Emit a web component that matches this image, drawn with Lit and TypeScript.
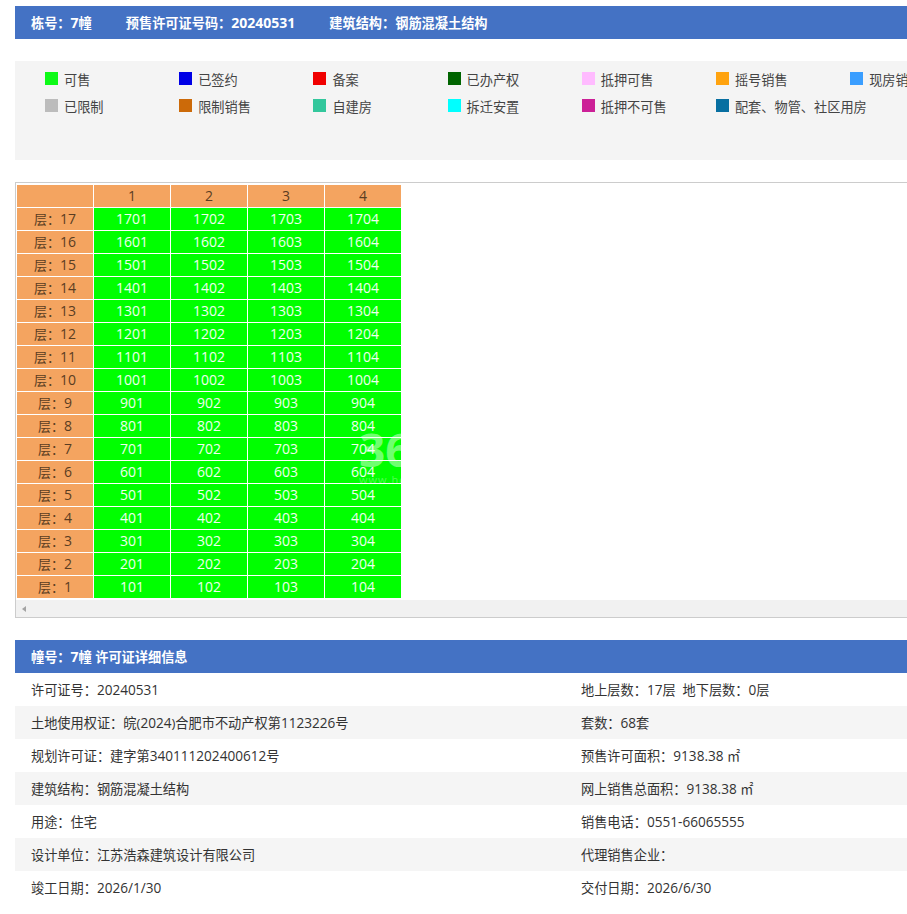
import { LitElement, html, css } from 'lit';
import { customElement } from 'lit/decorators.js';

const legend = [
  ['可售', '#0dfa17'], ['已签约', '#0000e6'], ['备案', '#f00000'], ['已办产权', '#006400'],
  ['抵押可售', '#ffbbff'], ['摇号销售', '#ffa30f'], ['现房销售', '#3a9eff'],
  ['已限制', '#bcbcbc'], ['限制销售', '#cc6a09'], ['自建房', '#33c79c'], ['拆迁安置', '#0ff'],
  ['抵押不可售', '#cc2097'], ['配套、物管、社区用房', '#086fa1'],
];

const floors = [17, 16, 15, 14, 13, 12, 11, 10, 9, 8, 7, 6, 5, 4, 3, 2, 1];

const details = [
  ['许可证号：20240531', '地上层数：17层\u00a0\u00a0地下层数：0层'],
  ['土地使用权证：皖(2024)合肥市不动产权第1123226号', '套数：68套'],
  ['规划许可证：建字第340111202400612号', '预售许可面积：9138.38 ㎡'],
  ['建筑结构：钢筋混凝土结构', '网上销售总面积：9138.38 ㎡'],
  ['用途：住宅', '销售电话：0551-66065555'],
  ['设计单位：江苏浩森建筑设计有限公司', '代理销售企业：'],
  ['竣工日期：2026/1/30', '交付日期：2026/6/30'],
];

// digits sit a little wider than the Chinese text around them
const nums = (text: string) =>
  text.split(/([0-9][0-9./-]*)/).map((part, i) => (i % 2 ? html`<span class="n">${part}</span>` : part));

@customElement('app-root')
export class AppRoot extends LitElement {
  static styles = css`
    :host {
      display: block;
      height: 914px;
      overflow: hidden;
      background: #fff;
      color: #333;
      font-family: "Open Sans", "Noto Sans CJK SC", sans-serif;
      font-size: 13.2px;
    }
    .page {
      width: 1200px;
      padding: 6px 0 0 15px;
    }
    .n {
      font-size: 13.6px;
    }
    .bar {
      display: flex;
      gap: 34px;
      height: 33px;
      align-items: center;
      padding-left: 16px;
      background: #4472c4;
      color: #fff;
      font-weight: 700;
    }
    .bar .n {
      font-size: 14px;
    }
    .legend {
      display: grid;
      grid-template-columns: repeat(7, 134.2px);
      grid-auto-rows: 27px;
      height: 99px;
      box-sizing: border-box;
      margin-top: 22px;
      padding: 5px 0 0 30px;
      background: #f4f4f4;
      color: #444;
    }
    .legend-item {
      display: flex;
      align-items: center;
      gap: 6px;
      white-space: nowrap;
    }
    .swatch {
      width: 13px;
      height: 13px;
      flex: none;
      margin-bottom: 2px;
    }
    .frame {
      position: relative;
      margin-top: 22px;
      border: 1px solid #ccc;
      padding-top: 1px;
    }
    table {
      border-collapse: separate;
      border-spacing: 1px;
      table-layout: fixed;
      font-size: 14px;
    }
    td, th {
      width: 76px;
      height: 21px;
      padding: 0 0 1px;
      text-align: center;
      font-weight: 400;
      background: #f4a460;
      color: #5a3d22;
    }
    td.unit {
      background: #0f0;
      color: #f0fff0;
    }
    .floor-label {
      font-size: 13px;
    }
    .scroll {
      display: flex;
      align-items: center;
      height: 17px;
      margin-top: 1px;
      padding-left: 6px;
      background: #f1f1f1;
    }
    .arrow {
      width: 0;
      height: 0;
      border: 3px solid transparent;
      border-left: 0;
      border-right: 4px solid #a3a3a3;
    }
    .mark {
      position: absolute;
      left: 343px;
      top: 238px;
      color: rgba(255, 255, 255, 0.45);
      pointer-events: none;
      white-space: nowrap;
    }
    .mark-num {
      font-size: 46px;
      font-weight: 700;
      line-height: 56px;
    }
    .mark-url {
      font-size: 11px;
      line-height: 12px;
      letter-spacing: 1px;
      margin-top: -3px;
      opacity: 0.7;
    }
    .info {
      margin-top: 22px;
    }
    .row {
      display: grid;
      grid-template-columns: 550px 1fr;
      height: 33px;
      align-items: center;
      padding-left: 16px;
    }
    .row:nth-child(even) {
      background: #f5f5f5;
    }
  `;

  render() {
    return html`
      <div class="page">
        <div class="bar">
          <span>栋号：${nums('7')}幢</span>
          <span>预售许可证号码：${nums('20240531')}</span>
          <span>建筑结构：钢筋混凝土结构</span>
        </div>
        <div class="legend">
          ${legend.map(([name, color]) => html`
            <div class="legend-item">
              <span class="swatch" style="background:${color}"></span>
              <span>${name}</span>
            </div>
          `)}
        </div>
        <div class="frame">
          <table>
            <tr><th></th>${[1, 2, 3, 4].map((c) => html`<th>${c}</th>`)}</tr>
            ${floors.map((f) => html`
              <tr>
                <td><span class="floor-label">层：</span>${f}</td>
                ${[1, 2, 3, 4].map((c) => html`<td class="unit">${f * 100 + c}</td>`)}
              </tr>
            `)}
          </table>
          <div class="scroll"><span class="arrow"></span></div>
          <div class="mark">
            <div class="mark-num">365</div>
            <div class="mark-url">www.house365.com</div>
          </div>
        </div>
        <div class="info">
          <div class="bar"><span>幢号：${nums('7')}幢 许可证详细信息</span></div>
          <div>
            ${details.map(([a, b]) => html`
              <div class="row">
                <span>${nums(a)}</span>
                <span>${nums(b)}</span>
              </div>
            `)}
          </div>
        </div>
      </div>
    `;
  }
}
